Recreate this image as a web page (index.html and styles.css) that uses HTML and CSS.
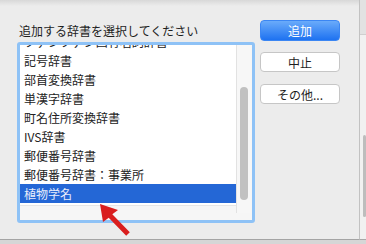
FILE: index.html
```html
<!DOCTYPE html>
<html lang="ja">
<head>
  <meta charset="UTF-8" />
  <meta name="viewport" content="width=device-width, initial-scale=1.0" />
  <title>辞書を追加</title>
  <link rel="stylesheet" href="styles.css">
</head>
<body>

<div class="screen">
  <div class="sheet">
    <div class="picker">
      <div class="prompt">追加する辞書を選択してください</div>
      <div class="listbox">
        <div class="list-main">
          <div class="rows">
            <div class="row">ファンファン固有名詞辞書</div>
            <div class="row">記号辞書</div>
            <div class="row">部首変換辞書</div>
            <div class="row">単漢字辞書</div>
            <div class="row">町名住所変換辞書</div>
            <div class="row">IVS辞書</div>
            <div class="row">郵便番号辞書</div>
            <div class="row">郵便番号辞書：事業所</div>
            <div class="row selected">植物学名</div>
          </div>
          <div class="list-foot"></div>
        </div>
        <div class="scrollbar"><div class="thumb"></div></div>
      </div>
    </div>
    <div class="actions">
      <button class="btn primary">追加</button>
      <button class="btn">中止</button>
      <button class="btn">その他...</button>
    </div>
  </div>
  <div class="behind">
    <div class="behind-top"></div>
    <div class="behind-bar"></div>
  </div>

  <!-- annotation arrow -->
  <svg class="arrow" width="32" height="34" viewBox="0 0 32 34">
    <polygon points="0,0 3,18 8.7,13.7 26.2,31.7 29.8,28.3 12.3,10.3 18,6" fill="#d91e1e" />
  </svg>
</div>

</body>
</html>
```

FILE: styles.css
```css
body {
  margin: 0;
  background: #d6d6d6;
  font-family: "Noto Sans CJK JP", "Noto Sans", sans-serif;
  color: #222;
}
.screen {
  position: relative;
  display: flex;
  width: 366px;
  height: 244px;
  overflow: hidden;
}
.sheet {
  display: flex;
  gap: 5px;
  width: 343px;
  height: 219px;
  padding: 20px 0 0 17px;
  background: linear-gradient(#d8d8d8, #ececec 6px);
  border-right: 1px solid #c2c2c2;
  border-bottom: 1px solid #a4a4a4;
}
.prompt {
  margin-top: 2px;
  margin-bottom: 3px;
  padding-left: 2px;
  font-size: 12px;
  line-height: 17px;
  color: #1e1e1e;
}
.listbox {
  display: flex;
  width: 232px;
  height: 175px;
  border: 3px solid #8ec2f6;
  border-radius: 3px;
  background: #f6f6f6;
}
.list-main {
  width: 216px;
  display: flex;
  flex-direction: column;
}
.rows {
  height: 160px;
  overflow: hidden;
  background: white;
}
.row {
  height: 19px;
  line-height: 19px;
  padding-left: 4px;
  font-size: 12px;
  white-space: nowrap;
}
.row:first-child {
  margin-top: -13px;
}
.selected {
  background: #2467d6;
  color: #e9eefb;
}
.list-foot {
  flex: 1;
  background: #f6f6f6;
  border-top: 1px solid #e6e6e6;
}
.scrollbar {
  width: 15px;
  height: 168px;
  border-left: 1px solid #e2e2e2;
  background: #f7f7f7;
  padding-top: 42px;
  box-sizing: border-box;
}
.thumb {
  width: 8px;
  height: 113px;
  margin-left: 3px;
  border-radius: 4px;
  background: #c1c1c1;
}
.actions {
  display: flex;
  flex-direction: column;
  gap: 12px;
}
.btn {
  width: 80px;
  height: 20px;
  padding: 0;
  border: 1px solid #c6c6c6;
  border-radius: 4px;
  background: white;
  font-family: inherit;
  font-size: 12px;
  color: #1e1e1e;
}
.primary {
  height: 21px;
  margin-bottom: -1px;
  border-color: #3b86f3;
  background: linear-gradient(#6aabfa, #1e72f1);
  color: white;
}
.behind {
  flex: 1;
  display: flex;
  flex-direction: column;
  background: #f1f1f1;
  height: 239px;
  border-bottom: 1px solid #a8a8a8;
}
.behind-top {
  height: 34px;
  background: #e2e2e2;
  border-bottom: 1px solid #cfcfcf;
}
.behind-bar {
  width: 3px;
  height: 82px;
  margin: 100px 0 0 3px;
  border-radius: 2px;
  background: #bdbdbd;
}
.arrow {
  position: absolute;
  left: 100px;
  top: 204px;
}
```
